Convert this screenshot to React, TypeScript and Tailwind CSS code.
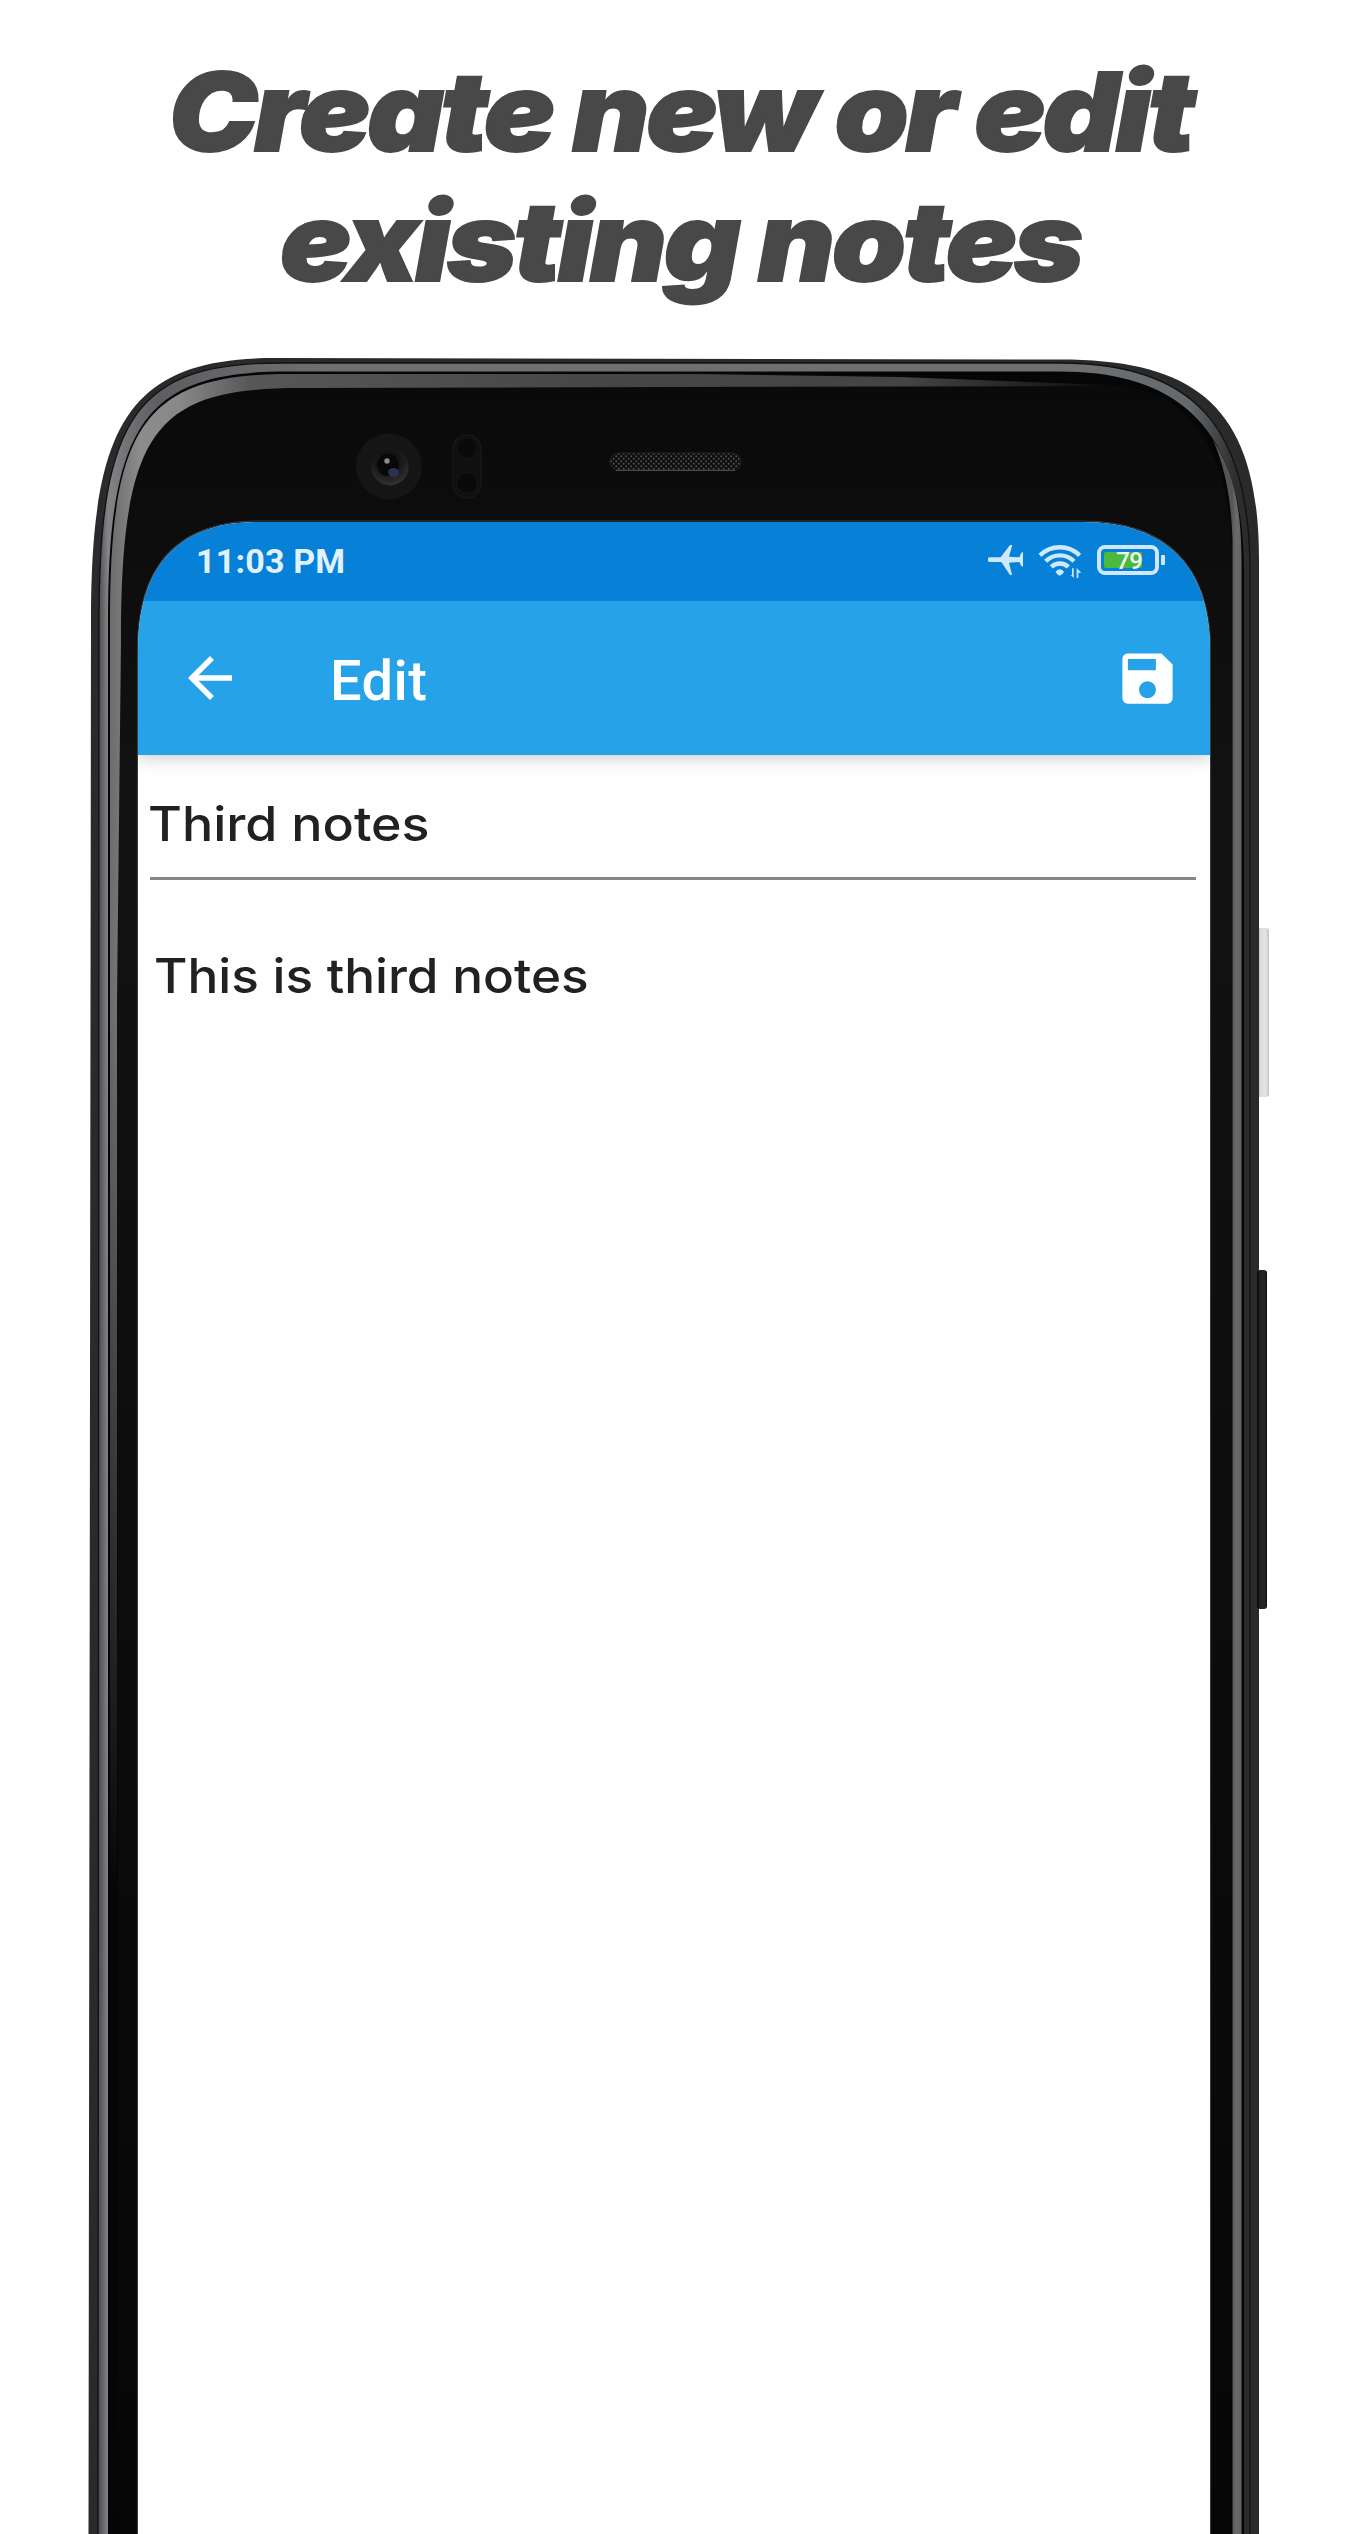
function PhoneFrame() {
  return (
    <svg
      className="pointer-events-none absolute inset-0"
      width="1370"
      height="2184"
      viewBox="0 350 1370 2184"
      aria-hidden="true"
    >
      <defs>
        <linearGradient id="rim" x1="90" x2="1259" y1="0" y2="0" gradientUnits="userSpaceOnUse">
          <stop offset="0" stopColor="#3c3d3f" />
          <stop offset="0.007" stopColor="#484a4c" />
          <stop offset="0.0155" stopColor="#838588" />
          <stop offset="0.03" stopColor="#727477" />
          <stop offset="0.06" stopColor="#5c5e61" />
          <stop offset="0.2" stopColor="#6d7073" />
          <stop offset="0.85" stopColor="#6d7073" />
          <stop offset="0.94" stopColor="#66696c" />
          <stop offset="0.98" stopColor="#2c2e30" />
          <stop offset="1" stopColor="#26292b" />
        </linearGradient>
        <linearGradient id="bevel" x1="110" x2="1107" y1="0" y2="0" gradientUnits="userSpaceOnUse">
          <stop offset="0" stopColor="#6c6c6c" />
          <stop offset="0.03" stopColor="#8c8c8c" />
          <stop offset="0.07" stopColor="#888888" />
          <stop offset="0.14" stopColor="#575757" />
          <stop offset="0.5" stopColor="#464646" />
          <stop offset="0.8" stopColor="#444444" />
          <stop offset="1" stopColor="#0c0c0c" />
        </linearGradient>
        <linearGradient id="fade" x1="0" x2="0" y1="1000" y2="1900" gradientUnits="userSpaceOnUse">
          <stop offset="0" stopColor="#050505" stopOpacity="0" />
          <stop offset="1" stopColor="#050505" stopOpacity="1" />
        </linearGradient>
        <linearGradient id="glass" x1="0" x2="0" y1="388" y2="2534" gradientUnits="userSpaceOnUse">
          <stop offset="0" stopColor="#0a0a0a" />
          <stop offset="0.2" stopColor="#121212" />
          <stop offset="0.5" stopColor="#0d0d0d" />
          <stop offset="1" stopColor="#060606" />
        </linearGradient>
        <linearGradient id="side" x1="1232" x2="1242" y1="0" y2="0" gradientUnits="userSpaceOnUse">
          <stop offset="0" stopColor="#555555" />
          <stop offset="0.4" stopColor="#6a6a6a" />
          <stop offset="1" stopColor="#636363" />
        </linearGradient>
        <linearGradient id="power" x1="1258" x2="1269" y1="0" y2="0" gradientUnits="userSpaceOnUse">
          <stop offset="0" stopColor="#bdbdbd" />
          <stop offset="0.25" stopColor="#dedede" />
          <stop offset="0.7" stopColor="#e4e4e4" />
          <stop offset="1" stopColor="#c4c4c4" />
        </linearGradient>
        <linearGradient id="volume" x1="1257" x2="1267" y1="0" y2="0" gradientUnits="userSpaceOnUse">
          <stop offset="0" stopColor="#080808" />
          <stop offset="0.3" stopColor="#222222" />
          <stop offset="0.75" stopColor="#262626" />
          <stop offset="1" stopColor="#0c0c0c" />
        </linearGradient>
        <pattern id="mesh" width="5" height="5" patternUnits="userSpaceOnUse">
          <rect width="5" height="5" fill="#0e0e0e" />
          <circle cx="1.2" cy="1.2" r="1" fill="#515151" />
          <circle cx="3.7" cy="3.7" r="1" fill="#515151" />
        </pattern>
        <radialGradient id="lens" cx="0.45" cy="0.3" r="0.7">
          <stop offset="0" stopColor="#0a0a0a" />
          <stop offset="0.6" stopColor="#1b1b1b" />
          <stop offset="1" stopColor="#333333" />
        </radialGradient>
      </defs>

      <rect x="1256" y="928" width="13" height="169" rx="3" fill="url(#power)" />

      <path d="M88.500 2534 L91 620 C91 422 130 358 275 358 L1060 359.500 C1200 359.500 1259 410 1259 560 V2534Z" fill="#2a2a2a" />
      <rect x="1257" y="1270" width="10" height="339" rx="3" fill="url(#volume)" />
      <path d="M98 2534 L99 620 C99 415 138 363 280 363 H1060 C1192 363 1250 425 1250 570 V2534Z" fill="url(#rim)" />
      <path d="M98 2534 L99 620 C99 415 138 363 280 363 H1060 C1192 363 1250 425 1250 570 V2534" fill="none" stroke="#101112" strokeWidth="1.300" />
      <path d="M108 2534 V620 C108 425 145 371.500 285 371.500 H1060 C1185 371.500 1243 435 1244 570 V2534Z" fill="#060606" />
      <path d="M110 2534 V620 C110 425 145 374 290 374 H700 L900 377 L1107 385 V389 H300 L121 2534Z" fill="url(#bevel)" />
      <path d="M117 2534 V1000 L121 640 C121 430 155 388 300 388 L1110 386 C1180 386 1232 440 1232 560 V2534Z" fill="url(#glass)" />
      <rect x="109" y="1000" width="9" height="1534" fill="url(#fade)" />
      <path d="M1213 440 C1232 470 1241 500 1241.500 560 V2534 H1232.500 V540 C1231 500 1226 470 1213 440Z" fill="url(#side)" />

      <circle cx="389" cy="466.500" r="33" fill="#151515" />
      <circle cx="390" cy="467" r="18.500" fill="url(#lens)" />
      <circle cx="388" cy="465" r="11" fill="#080808" />
      <circle cx="387" cy="461" r="2.700" fill="#8d8d8d" />
      <ellipse cx="393.500" cy="472.500" rx="5.500" ry="4.500" fill="#2b3350" />
      <rect x="453" y="435" width="28" height="63" rx="14" fill="#101010" stroke="#171717" strokeWidth="1.500" />
      <circle cx="467" cy="448" r="10.500" fill="#0a0a0b" stroke="#161616" />
      <circle cx="467" cy="483" r="10.500" fill="#0a0a0b" stroke="#161616" />
      <rect x="610" y="453" width="131" height="17.500" rx="8.700" fill="url(#mesh)" stroke="#202020" />
      <path d="M616 470.300 H735" stroke="#555555" strokeWidth="1" />
      <path d="M137.500 2534 V650 C137.500 569 174.500 521 257 521 H1083 C1165.500 521 1210.500 565 1210.500 650 V2534" fill="none" stroke="#3a3a3a" strokeWidth="1.200" />
    </svg>
  );
}

function AirplaneIcon() {
  return (
    <svg width="36" height="32" viewBox="54 72 108 96" fill="#cfe8fb" aria-hidden="true">
      <path d="M60 112H92L120 75H127L117 110L148 112L154 98L159 96V140L154 138L148 126L117 128L126 165H120L94 126H60A7 7 0 0 1 60 112Z" />
    </svg>
  );
}

function WifiIcon() {
  return (
    <svg width="44" height="36" viewBox="205 72 132 108" aria-hidden="true">
      <g fill="none" stroke="#cfe8fb" strokeWidth="13">
        <path d="M211 106A85 85 0 0 1 330 106" />
        <path d="M228 124A59 59 0 0 1 313 124" />
        <path d="M245 141A36 36 0 0 1 296 141" />
      </g>
      <path d="M258 155Q270 141 283 155Q280 164 270 167Q261 164 258 155Z" fill="#cfe8fb" />
      <path d="M307 145H312V174L303 165H307ZM321 174H326V158H335L321 144Z" fill="#cfe8fb" stroke="#0780d8" strokeWidth="5" paintOrder="stroke" />
    </svg>
  );
}

function Battery() {
  return (
    <div className="flex items-center gap-[2px]">
      <div className="flex h-[30px] w-[62px] items-center rounded-[8px] border-4 border-[#cfe8fb] pl-[3px]">
        <div className="flex h-4 w-[38px] items-center justify-end rounded-[2px] bg-[#4ab93d]">
          <span className="mt-px text-[24px] font-medium leading-none tracking-[-0.8px] text-[#eefbf2]">79</span>
        </div>
      </div>
      <div className="h-[10px] w-1 rounded-[1px] bg-[#cfe8fb]" />
    </div>
  );
}

export default function App() {
  return (
    <main className="h-[2534px] w-[1370px] overflow-hidden bg-white">
      <h1 className="flex h-[350px] flex-col items-center pr-[10px] pt-[46px] font-['Inter'] text-[109px] font-black italic leading-[130px] text-[#484848] [-webkit-text-stroke:2px_#484848]">
        <span className="origin-center scale-x-[1.09] whitespace-nowrap tracking-[-3px]">Create new or edit</span>
        <span className="origin-center scale-x-[1.09] whitespace-nowrap tracking-[-3px]">existing notes</span>
      </h1>

      <section className="relative h-[2184px] pl-[138px] pt-[172px]">
        <PhoneFrame />
        <div className="relative flex h-[2012px] w-[1072px] flex-col bg-[#fefefe] [clip-path:path('M0_128C0_48_37_0_119_0H945C1027_0_1072_44_1072_128V2012H0Z')]">
          <div className="relative z-10 flex h-[79px] shrink-0 items-start justify-between bg-[#0780d8] pl-[58px] pr-[45px] font-['Roboto']">
            <span className="mt-[19px] text-[34px] font-bold leading-[40px] tracking-[0.2px] text-[#e1f2fe]">11:03 PM</span>
            <div className="mt-[22px] flex items-start">
              <AirplaneIcon />
              <div className="ml-[14px]">
                <WifiIcon />
              </div>
              <div className="ml-[15px] mt-px">
                <Battery />
              </div>
            </div>
          </div>

          <header className="flex h-[154px] shrink-0 items-start bg-[#25a2e8] pl-[39px] pr-[29px] pt-[43px] text-white shadow-[0_2px_16px_rgba(0,0,0,0.22)]">
            <svg className="mt-px" width="66" height="66" viewBox="0 0 24 24" fill="currentColor" aria-label="Back">
              <path d="M20 11H7.830l5.590-5.590L12 4l-8 8 8 8 1.410-1.410L7.830 13H20v-2z" />
            </svg>
            <h2 className="ml-[87px] mt-[5px] flex-1 font-['Roboto'] text-[56px] font-medium leading-[64px] tracking-[0.4px]">Edit</h2>
            <svg className="mt-px" width="67" height="67" viewBox="0 0 24 24" fill="currentColor" aria-label="Save">
              <path d="M17 3H5c-1.110 0-2 .9-2 2v14c0 1.100.89 2 2 2h14c1.100 0 2-.9 2-2V7l-4-4zm-5 16c-1.660 0-3-1.340-3-3s1.340-3 3-3 3 1.340 3 3-1.340 3-3 3zm3-10H5V5h10v4z" />
            </svg>
          </header>

          <div className="pl-3 pr-[14px] pt-[39px] font-['Inter'] font-medium leading-[60px] text-[#212121]">
            <div className="h-[86px] border-b-[3px] border-[#858585]">
              <p className="-ml-[2px] w-max origin-left scale-x-[1.082] whitespace-nowrap text-[48px]">Third notes</p>
            </div>
            <p className="ml-1 mt-[66px] w-max origin-left scale-x-[1.068] whitespace-nowrap text-[48px]">This is third notes</p>
          </div>
        </div>
      </section>
    </main>
  );
}
